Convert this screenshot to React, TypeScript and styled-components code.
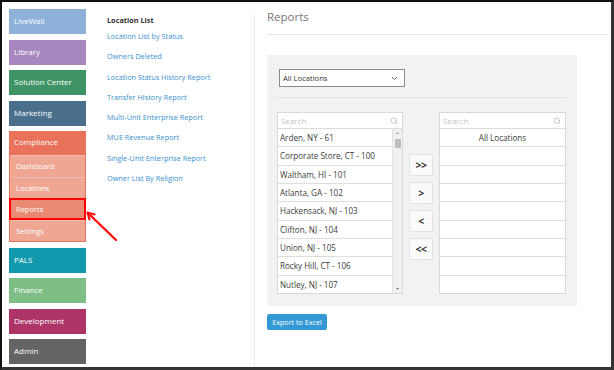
import styled, { createGlobalStyle } from "styled-components";
import { Search } from "lucide-react";

const GlobalStyle = createGlobalStyle`
  body {
    margin: 0;
    background: #fff;
    font-family: "Open Sans", "Liberation Sans", sans-serif;
  }
`;

const menu = [
  { label: "LiveWall", color: "#8eb1d9" },
  { label: "Library", color: "#a886bf" },
  { label: "Solution Center", color: "#3f9467" },
  { label: "Marketing", color: "#4a6f8d" },
];

const menuBottom = [
  { label: "PALS", color: "#1399ad" },
  { label: "Finance", color: "#7dbf86" },
  { label: "Development", color: "#ae3468" },
  { label: "Admin", color: "#646464" },
];

const subItems = ["Dashboard", "Locations", "Reports", "Settings"];

const reportLinks = [
  "Location List by Status",
  "Owners Deleted",
  "Location Status History Report",
  "Transfer History Report",
  "Multi-Unit Enterprise Report",
  "MUE Revenue Report",
  "Single-Unit Enterprise Report",
  "Owner List By Religion",
];

const locations = [
  "Arden, NY - 61",
  "Corporate Store, CT - 100",
  "Waltham, HI - 101",
  "Atlanta, GA - 102",
  "Hackensack, NJ - 103",
  "Clifton, NJ - 104",
  "Union, NJ - 105",
  "Rocky Hill, CT - 106",
  "Nutley, NJ - 107",
];

const selected = ["All Locations", "", "", "", "", "", "", "", ""];

function App() {
  return (
    <>
      <GlobalStyle />
      <Frame>
        <Sidebar>
          {menu.map((m) => (
            <Tile key={m.label} $bg={m.color}>
              {m.label}
            </Tile>
          ))}
          <Group>
            <GroupHead>Compliance</GroupHead>
            {subItems.map((s) => (
              <SubItem key={s} $active={s === "Reports"}>
                {s}
              </SubItem>
            ))}
          </Group>
          {menuBottom.map((m) => (
            <Tile key={m.label} $bg={m.color}>
              {m.label}
            </Tile>
          ))}
        </Sidebar>

        <LinkColumn>
          <LinkHeading>Location List</LinkHeading>
          {reportLinks.map((l) => (
            <ReportLink key={l}>{l}</ReportLink>
          ))}
        </LinkColumn>

        <Divider />

        <Main>
          <TitleBar>Reports</TitleBar>
          <Panel>
            <Select>
              All Locations
              <svg width="7" height="5" viewBox="0 0 7 5">
                <path d="M1 1 L3.5 3.5 L6 1" fill="none" stroke="#666" strokeWidth="1" />
              </svg>
            </Select>
            <PanelRule />
            <Transfer>
              <ListBox>
                <SearchRow>
                  Search
                  <Search size={8} color="#aaa" strokeWidth={2} />
                </SearchRow>
                <ScrollArea>
                  <Rows>
                    {locations.map((l) => (
                      <Row key={l}>{l}</Row>
                    ))}
                  </Rows>
                  <Scrollbar>
                    <svg width="9" height="8" viewBox="0 0 9 8">
                      <path d="M3 5 L4.5 3.5 L6 5 Z" fill="#888" />
                    </svg>
                    <Thumb />
                    <ScrollSpacer />
                    <svg width="9" height="8" viewBox="0 0 9 8">
                      <path d="M3 3 L4.5 4.5 L6 3 Z" fill="#555" />
                    </svg>
                  </Scrollbar>
                </ScrollArea>
              </ListBox>

              <Buttons>
                <MoveButton>&gt;&gt;</MoveButton>
                <MoveButton>&gt;</MoveButton>
                <MoveButton>&lt;</MoveButton>
                <MoveButton>&lt;&lt;</MoveButton>
              </Buttons>

              <ListBox $wide>
                <SearchRow>
                  Search
                  <Search size={8} color="#aaa" strokeWidth={2} />
                </SearchRow>
                <Rows>
                  {selected.map((l, i) => (
                    <Row key={i} $center>
                      {l}
                    </Row>
                  ))}
                </Rows>
              </ListBox>
            </Transfer>
          </Panel>
          <ExportButton>Export to Excel</ExportButton>
        </Main>

        <Arrow width="40" height="40" viewBox="0 0 40 40">
          <path d="M31 31 L3 4" stroke="#ff1010" strokeWidth="2.4" fill="none" strokeLinecap="round" />
          <path d="M9.5 5.5 L2.5 3.5 L4.5 10.5" stroke="#ff1010" strokeWidth="2.2" fill="none" strokeLinejoin="round" strokeLinecap="round" />
        </Arrow>
      </Frame>
    </>
  );
}

export default App;

const Frame = styled.div`
  position: relative;
  box-sizing: border-box;
  width: 614px;
  height: 370px;
  border-top: 2px solid #111;
  border-left: 2px solid #111;
  border-right: 3px solid #333;
  border-bottom: 3px solid #333;
  display: flex;
  overflow: hidden;
`;

const Sidebar = styled.div`
  width: 98px;
  padding: 7px 0 0 7px;
  display: flex;
  flex-direction: column;
  gap: 5.5px;
  flex-shrink: 0;
`;

const Tile = styled.div<{ $bg: string }>`
  width: 77px;
  height: 25px;
  box-sizing: border-box;
  background: ${(p) => p.$bg};
  color: #fff;
  font-size: 8px;
  padding: 0 0 2px 5px;
  display: flex;
  align-items: center;
`;

const Group = styled.div`
  width: 77px;
  box-sizing: border-box;
  background: #e8735a;
  padding: 0 1px 1px;
  display: flex;
  flex-direction: column;
`;

const GroupHead = styled.div`
  height: 24px;
  box-sizing: border-box;
  color: #fff;
  font-size: 8px;
  padding: 0 0 3px 4px;
  display: flex;
  align-items: center;
`;

const SubItem = styled.div<{ $active?: boolean }>`
  height: 21.5px;
  box-sizing: border-box;
  color: #fff;
  font-size: 7.5px;
  display: flex;
  align-items: center;
  background: ${(p) => (p.$active ? "#ea8a72" : "#efa693")};
  border-top: 1px solid #f4bcad;
  padding-left: ${(p) => (p.$active ? "5px" : "6px")};
  ${(p) =>
    p.$active &&
    `
    margin: 0 -1px;
    border: 2px solid #ff0000;
  `}
`;

const LinkColumn = styled.div`
  width: 147px;
  padding-top: 12px;
  flex-shrink: 0;
`;

const LinkHeading = styled.div`
  font-size: 7.3px;
  font-weight: 700;
  color: #333;
  line-height: 12px;
`;

const ReportLink = styled.div`
  font-size: 7.3px;
  color: #3b8fd0;
  line-height: 20.3px;
  white-space: nowrap;
`;

const Divider = styled.div`
  width: 1px;
  margin-top: 12px;
  background: #ececec;
  flex-shrink: 0;
`;

const Main = styled.div`
  flex: 1;
  padding-left: 12px;
  padding-right: 3px;
`;

const TitleBar = styled.div`
  height: 33px;
  box-sizing: border-box;
  padding-top: 7px;
  font-size: 11.5px;
  line-height: 16px;
  color: #777;
  border-bottom: 1px solid #e8e8e8;
`;

const Panel = styled.div`
  width: 310px;
  height: 251px;
  box-sizing: border-box;
  margin-top: 20px;
  background: #f2f2f2;
  padding: 14px 10px 0;
`;

const Select = styled.div`
  margin-left: 2px;
  width: 126px;
  height: 18px;
  box-sizing: border-box;
  border: 1px solid #8a8a8a;
  background: #fff;
  font-size: 7.6px;
  color: #333;
  padding: 0 6px 0 3px;
  display: flex;
  align-items: center;
  justify-content: space-between;
`;

const PanelRule = styled.div`
  height: 1px;
  background: #e2e2e2;
  margin: 10px 0 14px;
`;

const Transfer = styled.div`
  display: flex;
  gap: 6px;
`;

const ListBox = styled.div<{ $wide?: boolean }>`
  width: ${(p) => (p.$wide ? "127px" : "126px")};
  height: 182px;
  box-sizing: border-box;
  border: 1px solid #d9d9d9;
  background: #fff;
  display: flex;
  flex-direction: column;
`;

const SearchRow = styled.div`
  height: 15px;
  flex-shrink: 0;
  display: flex;
  align-items: center;
  justify-content: space-between;
  padding: 0 4px 0 3px;
  font-size: 8px;
  color: #c4c4c4;
  border-bottom: 1px solid #dcdcdc;
`;

const ScrollArea = styled.div`
  flex: 1;
  display: flex;
`;

const Rows = styled.div`
  flex: 1;
  display: flex;
  flex-direction: column;
`;

const Row = styled.div<{ $center?: boolean }>`
  flex: 1;
  box-sizing: border-box;
  border-bottom: 1.5px solid #dedede;
  font-size: 8.1px;
  color: #3b3b3b;
  display: flex;
  align-items: center;
  white-space: nowrap;
  justify-content: ${(p) => (p.$center ? "center" : "flex-start")};
  padding-left: ${(p) => (p.$center ? "0" : "2px")};
  &:last-child {
    border-bottom: none;
  }
`;

const Scrollbar = styled.div`
  width: 9px;
  background: #f1f1f1;
  border-left: 1px solid #e4e4e4;
  display: flex;
  flex-direction: column;
  align-items: center;
`;

const Thumb = styled.div`
  width: 6px;
  height: 9px;
  margin-top: 2px;
  background: #bdbdbd;
`;

const ScrollSpacer = styled.div`
  flex: 1;
`;

const Buttons = styled.div`
  padding-top: 42px;
  display: flex;
  flex-direction: column;
  gap: 6px;
`;

const MoveButton = styled.div`
  width: 24px;
  height: 22px;
  box-sizing: border-box;
  background: #fafafa;
  border: 1px solid #e2e2e2;
  border-radius: 2px;
  color: #333;
  font-size: 10.5px;
  font-weight: 700;
  letter-spacing: -0.5px;
  display: flex;
  align-items: center;
  justify-content: center;
`;

const ExportButton = styled.div`
  margin-top: 8px;
  width: 60px;
  height: 16px;
  border-radius: 2px;
  background: #3399d4;
  color: #fff;
  font-size: 7.2px;
  display: flex;
  align-items: center;
  justify-content: center;
`;

const Arrow = styled.svg`
  position: absolute;
  left: 83px;
  top: 207px;
`;
